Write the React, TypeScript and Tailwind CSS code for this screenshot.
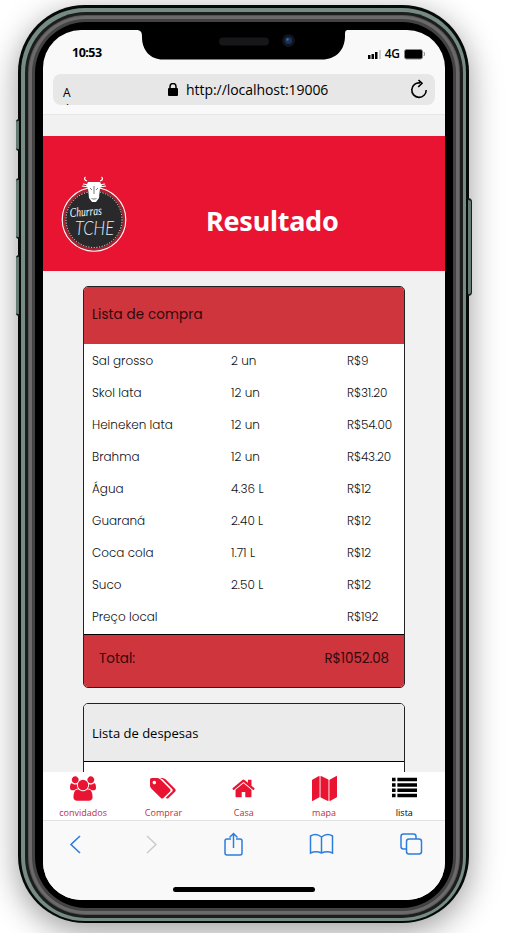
import React from "react";

const items = [
  { name: "Sal grosso", qty: "2 un", price: "R$9" },
  { name: "Skol lata", qty: "12 un", price: "R$31.20" },
  { name: "Heineken lata", qty: "12 un", price: "R$54.00" },
  { name: "Brahma", qty: "12 un", price: "R$43.20" },
  { name: "Água", qty: "4.36 L", price: "R$12" },
  { name: "Guaraná", qty: "2.40 L", price: "R$12" },
  { name: "Coca cola", qty: "1.71 L", price: "R$12" },
  { name: "Suco", qty: "2.50 L", price: "R$12" },
  { name: "Preço local", qty: "", price: "R$192" },
];

const geo = "font-['Poppins','Inter',sans-serif] [font-feature-settings:'cv11']";

function Logo() {
  return (
    <svg width="68" height="78" viewBox="0 0 68 78" className="shrink-0">
      <circle cx="34" cy="43.5" r="31.8" fill="#a62330" stroke="#fff" strokeWidth="1.1" />
      <circle cx="34" cy="43.5" r="28.7" fill="#29292b" />
      <circle cx="34" cy="43.5" r="28" fill="none" stroke="#fff" strokeWidth="1" strokeDasharray="1 1.7" />
      <path d="M27 5c-3-1-3-3-1.500-4M40 5c3-1 3-3 1.500-4M22 10l7 1M46 10l-7 1M23 8l6 1M45 8l-6 1" stroke="#fff" strokeWidth="1.200" fill="none" />
      <path d="M28 6h12l2 4-2 2-1 10-3 4h-4l-3-4-1-10-2-2z" fill="#fff" />
      <path d="M30 12l2 2M38 12l-2 2M31.500 22l1 1h3l1-1M34 10v8" stroke="#555" strokeWidth="0.8" fill="none" />
      <text x="10" y="41" transform="rotate(-4 10 41)" fill="#fff" fontFamily="Liberation Serif, serif" fontStyle="italic" fontSize="13" textLength="32" lengthAdjust="spacingAndGlyphs">Churras</text>
      <text x="15" y="59" fill="#eee" fontFamily="Lato, sans-serif" fontWeight="300" fontStyle="italic" fontSize="20" textLength="39" lengthAdjust="spacingAndGlyphs">TCHE</text>
    </svg>
  );
}

const tabs = [
  {
    label: "convidados", box: "0 0 1920 1792", size: 26, top: 3,
    d: "M593 896q-162 5-265 128h-134q-82 0-138-40.5t-56-118.5q0-353 124-353 6 0 43.5 21t97.5 42.5 119 21.5q67 0 133-23-5 37-5 66 0 139 81 256zm1071 637q0 120-73 189.5t-194 69.5h-874q-121 0-194-69.5t-73-189.5q0-53 3.500-103.500t14-109 26.500-108.500 43-97.500 62-81 85.500-53.500 111.500-20q10 0 43 21.500t73 48 107 48 135 21.500 135-21.500 107-48 73-48 43-21.500q61 0 111.500 20t85.500 53.500 62 81 43 97.500 26.500 108.500 14 109 3.500 103.500zm-1024-1277q0 106-75 181t-181 75-181-75-75-181 75-181 181-75 181 75 75 181zm704 384q0 159-112.500 271.500t-271.500 112.500-271.500-112.500-112.500-271.500 112.500-271.500 271.500-112.500 271.500 112.500 112.500 271.500zm576 225q0 78-56 118.500t-138 40.500h-134q-103-123-265-128 81-117 81-256 0-29-5-66 66 23 133 23 59 0 119-21.500t97.500-42.500 43.500-21q124 0 124 353zm-128-609q0 106-75 181t-181 75-181-75-75-181 75-181 181-75 181 75 75 181z",
  },
  {
    label: "Comprar", box: "0 0 1920 1792", size: 26, top: 3,
    d: "M448 448q0-53-37.500-90.500t-90.500-37.500-90.500 37.500-37.500 90.500 37.500 90.500 90.500 37.500 90.500-37.500 37.500-90.500zm1067 576q0 53-37 90l-491 492q-39 37-91 37-53 0-90-37l-715-716q-38-37-64.500-101t-26.500-117v-416q0-52 38-90t90-38h416q53 0 117 26.500t102 64.500l715 714q37 39 37 91zm384 0q0 53-37 90l-491 492q-39 37-91 37-36 0-59-14t-53-45l470-470q37-37 37-90 0-52-37-91l-715-714q-38-38-102-64.500t-117-26.500h224q53 0 117 26.500t102 64.500l715 714q37 39 37 91z",
  },
  {
    label: "Casa", box: "0 0 1664 1792", size: 23, top: 3,
    d: "M1408 992v480q0 26-19 45t-45 19h-384v-384h-256v384h-384q-26 0-45-19t-19-45v-480q0-1 .5-3t.5-3l575-474 575 474q1 2 1 6zm223-69l-62 74q-8 9-21 11h-3q-13 0-21-7l-692-577-692 577q-12 8-24 7-13-2-21-11l-62-74q-8-10-7-23.500t11-21.500l719-599q32-26 76-26t76 26l244 204v-195q0-14 9-23t23-9h192q14 0 23 9t9 23v408l219 182q10 8 11 21.500t-7 23.500z",
  },
  {
    label: "mapa", box: "0 0 1792 1792", size: 25, top: 3,
    d: "M512 0q13 0 22.500 9.500t9.500 22.500v1472q0 20-17 28l-480 256q-7 4-15 4-13 0-22.500-9.500t-9.500-22.500v-1472q0-20 17-28l480-256q7-4 15-4zm1248 0q13 0 22.500 9.500t9.500 22.500v1472q0 20-17 28l-480 256q-7 4-15 4-13 0-22.500-9.500t-9.500-22.500v-1472q0-20 17-28l480-256q7-4 15-4zm-1120 0q8 0 14 3l512 256q18 10 18 29v1472q0 13-9.500 22.500t-22.500 9.500q-8 0-14-3l-512-256q-18-10-18-29v-1472q0-13 9.500-22.500t22.500-9.500z",
  },
  {
    label: "lista", box: "0 0 1792 1792", size: 25, top: 3,
    d: "M0 128h256v250H0zM384 128h1408v250H384zM0 512h256v250H0zM384 512h1408v250H384zM0 896h256v250H0zM384 896h1408v250H384zM0 1280h256v250H0zM384 1280h1408v250H384z",
  },
];

function Notch() {
  return (
    <svg className="absolute left-[93px] top-0" width="212" height="30" viewBox="0 0 212 30">
      <path d="M0 0H212C209 0 209 2 209 6C209 20 200 29.500 186 29.500H27C14 29.500 6 20 6 7C6 2 5 0 0 0Z" fill="#000" />
      <rect x="83" y="7.500" width="50" height="8" rx="4" fill="#171719" />
      <circle cx="152.500" cy="10.500" r="6.300" fill="#11151d" />
      <circle cx="152.500" cy="10.500" r="3.500" fill="#19315d" />
      <circle cx="151.500" cy="9.500" r="1.200" fill="#4169a6" />
    </svg>
  );
}

export default function App() {
  return (
    <div className="h-[933px] w-[506px] overflow-hidden bg-white font-['Segoe_UI','Open_Sans',sans-serif] text-black">
      <div className="relative ml-[18px] mt-[5px] h-[918px] w-[451px] rounded-[67px] bg-[#050a09] p-[3px] pb-[2px] shadow-[0_8px_32px_rgba(0,0,0,0.4)]">
        <div className="absolute -left-[2px] top-[114px] h-[32px] w-[3px] rounded-l-sm border-y-2 border-[#151d1a] bg-[#657a72]" />
        <div className="absolute -left-[2px] top-[173px] h-[61px] w-[3px] rounded-l-sm border-y-2 border-[#151d1a] bg-[#657a72]" />
        <div className="absolute -left-[2px] top-[250px] h-[61px] w-[3px] rounded-l-sm border-y-2 border-[#151d1a] bg-[#657a72]" />
        <div className="absolute -right-[3px] top-[193px] h-[98px] w-[4px] rounded-r-sm border-y-2 border-r border-[#17201c] bg-[#657a72]" />
        <div className="h-full rounded-[64px] bg-[#768b84] p-[3.5px]">
          <div className="h-full rounded-[61px] bg-[#1c1e1e] p-[3px]">
            <div className="h-full rounded-[58px] bg-[#565555] p-px">
              <div className="h-full rounded-[57px] bg-[#6b6969] p-[3px]">
                <div className="h-full rounded-[54px] bg-[#444343] p-[3px]">
                  <div className="h-full rounded-[51px] bg-black pb-[8px] pl-[8.5px] pr-[8px] pt-[8.5px]">
                    <div className="relative flex h-full flex-col overflow-hidden rounded-[38px] bg-[#f9f9f9]">
                      <Notch />
                      <div className="flex h-[44px] shrink-0 items-center justify-between pl-[29px] pr-[20px] pt-[2px]">
                        <span className="font-['Segoe_UI','Noto_Sans',sans-serif] text-[12.5px] font-bold leading-4 tracking-[-0.5px]">10:53</span>
                        <div className="flex items-center gap-[4px] pt-[2px]">
                          <svg width="13" height="9"><path d="M0 5h2.500v4H0zM3.500 4H6v5H3.500zM7 2h2.500v7H7z" /><path d="M11 0h2v9h-2z" fill="#ccc" /></svg>
                          <span className="text-[12px] font-semibold leading-4 tracking-[-0.4px]">4G</span>
                          <svg width="21" height="11"><rect x=".5" y=".5" width="18" height="9.500" rx="2" fill="#000" stroke="#888" /><path d="M20 3q1 2 0 4" stroke="#888" fill="none" /></svg>
                        </div>
                      </div>
                      <div className="mx-[10px] flex h-[31px] shrink-0 items-center rounded-[8px] bg-[#e7e7e7]">
                        <div className="relative h-full w-[40px] overflow-hidden">
                          <div className="pl-[10px] pt-[10px] text-[12px] leading-[17px]">A</div>
                          <div className="pl-[12px] text-[8px] leading-[9px]">A</div>
                        </div>
                        <div className="flex flex-1 items-center gap-[8px] pl-[75px]">
                          <svg width="10" height="13" viewBox="0 0 10 13"><path d="M2 6V3.500a3 3 0 0 1 6 0V6" fill="none" stroke="#000" strokeWidth="1.500" /><rect y="5" width="10" height="8" rx="1" /></svg>
                          <span className="text-[14px] leading-5 tracking-[-0.05px]">http://localhost:19006</span>
                        </div>
                        <svg className="mr-[7px]" width="18" height="21" viewBox="0 0 18 21" fill="none" stroke="#000" strokeWidth="1.600"><path d="M10 4A7.200 7.200 0 1 0 16.200 11M8.500 1l3.500 3.300-3.800 3.700" /></svg>
                      </div>
                      <div className="h-[10px] shrink-0 border-b border-[#e6e6e6]" />
                      <main className="min-h-0 flex-1 overflow-hidden bg-[#f1f1f1] pt-[21px]">
                        <header className="flex h-[135px] items-center bg-[#e81432] pl-[17px]">
                          <div className="pt-[23px]"><Logo /></div>
                          <h1 className="ml-[78px] mt-[35px] font-['Segoe_UI','Noto_Sans',sans-serif] text-[27px] font-bold leading-9 tracking-[-0.25px] text-white">Resultado</h1>
                        </header>
                        <section className={`${geo} ml-[40px] mt-[15px] h-[402px] w-[322px] overflow-hidden rounded-[5px] border border-[#222] bg-white`}>
                          <h2 className="flex h-[57px] items-center bg-[#ce353d] pl-[8px] text-[13.5px] tracking-[0.12px] text-[#30090b]">Lista de compra</h2>
                          <div className="h-[290px] pt-px">
                            {items.map((item) => (
                              <div key={item.name} className="grid h-8 grid-cols-[139px_116px_1fr] items-center pl-[8px] text-[12px] font-light text-[#111]">
                                <span>{item.name}</span><span>{item.qty}</span><span className="tracking-[-0.15px]">{item.price}</span>
                              </div>
                            ))}
                          </div>
                          <div className="flex h-[53px] items-center justify-between border-t border-black bg-[#ce353d] pb-[3px] pl-[15px] pr-[15px] text-[13.5px] text-[#30090b]">
                            <span>Total:</span><span className="tracking-[-0.1px]">R$1052.08</span>
                          </div>
                        </section>
                        <section className="ml-[40px] mt-[15px] h-[100px] w-[322px] overflow-hidden rounded-[5px] border border-[#222] bg-white">
                          <h2 className="flex h-[58px] items-center border-b border-black bg-[#ebebeb] pl-[8px] pt-[2px] text-[13px]">Lista de despesas</h2>
                        </section>
                      </main>
                      <nav className="grid h-[48px] shrink-0 grid-cols-5 bg-white">
                        {tabs.map((tab, index) => (
                          <div key={tab.label} className={`flex flex-col items-center pt-[4px] ${index === 4 ? "text-black" : "text-[#e81432]"}`}>
                            <svg width={tab.size} height="25" viewBox={tab.box} fill="currentColor" fillRule={index === 1 ? "evenodd" : "nonzero"}><path d={tab.d} /></svg>
                            <span className={`mt-[5px] text-[9px] leading-[14px] ${index === 4 ? "" : "text-[#c42c40]"}`}>{tab.label}</span>
                          </div>
                        ))}
                      </nav>
                      <footer className="flex h-[80px] shrink-0 flex-col border-t border-[#e2e2e2] bg-[#f9f9f9]">
                        <div className="flex items-center justify-between pl-[26px] pr-[22px] pt-[11px] text-[#2d7ddd]">
                          <svg width="12" height="19" viewBox="0 0 12 19" fill="none" stroke="currentColor" strokeWidth="1.600"><path d="M11 1L2 9.500 11 18" /></svg>
                          <svg width="12" height="19" viewBox="0 0 12 19" fill="none" stroke="#ccc" strokeWidth="1.500"><path d="M1 1l9 8.500L1 18" /></svg>
                          <svg width="20" height="25" viewBox="0 0 20 25" fill="none" stroke="currentColor" strokeWidth="1.500"><path d="M7 7H3q-2 0-2 2v12q0 2 2 2h13q2 0 2-2V9q0-2-2-2h-4M9.500 16V1.500M5.500 5.500l4-4 4 4" /></svg>
                          <svg width="25" height="22" viewBox="0 0 25 22" fill="none" stroke="currentColor" strokeWidth="1.500"><path d="M12.500 4Q7-.5 1.500 3v17q5.500-2.500 11 0 5.500-2.500 11 0V3Q18-.5 12.500 4zv16" /></svg>
                          <svg width="23" height="22" viewBox="0 0 23 22" fill="none" stroke="currentColor" strokeWidth="1.500"><rect x="6.500" y="6" width="15" height="15" rx="2.500" /><path d="M6 16H3.500Q1 16 1 13.500v-10Q1 1 3.500 1h10Q16 1 16 3.500V6" /></svg>
                        </div>
                        <div className="mx-auto mt-auto mb-[8px] h-[5px] w-[142px] rounded-full bg-black" />
                      </footer>
                    </div>
                  </div>
                </div>
              </div>
            </div>
          </div>
        </div>
      </div>
    </div>
  );
}
